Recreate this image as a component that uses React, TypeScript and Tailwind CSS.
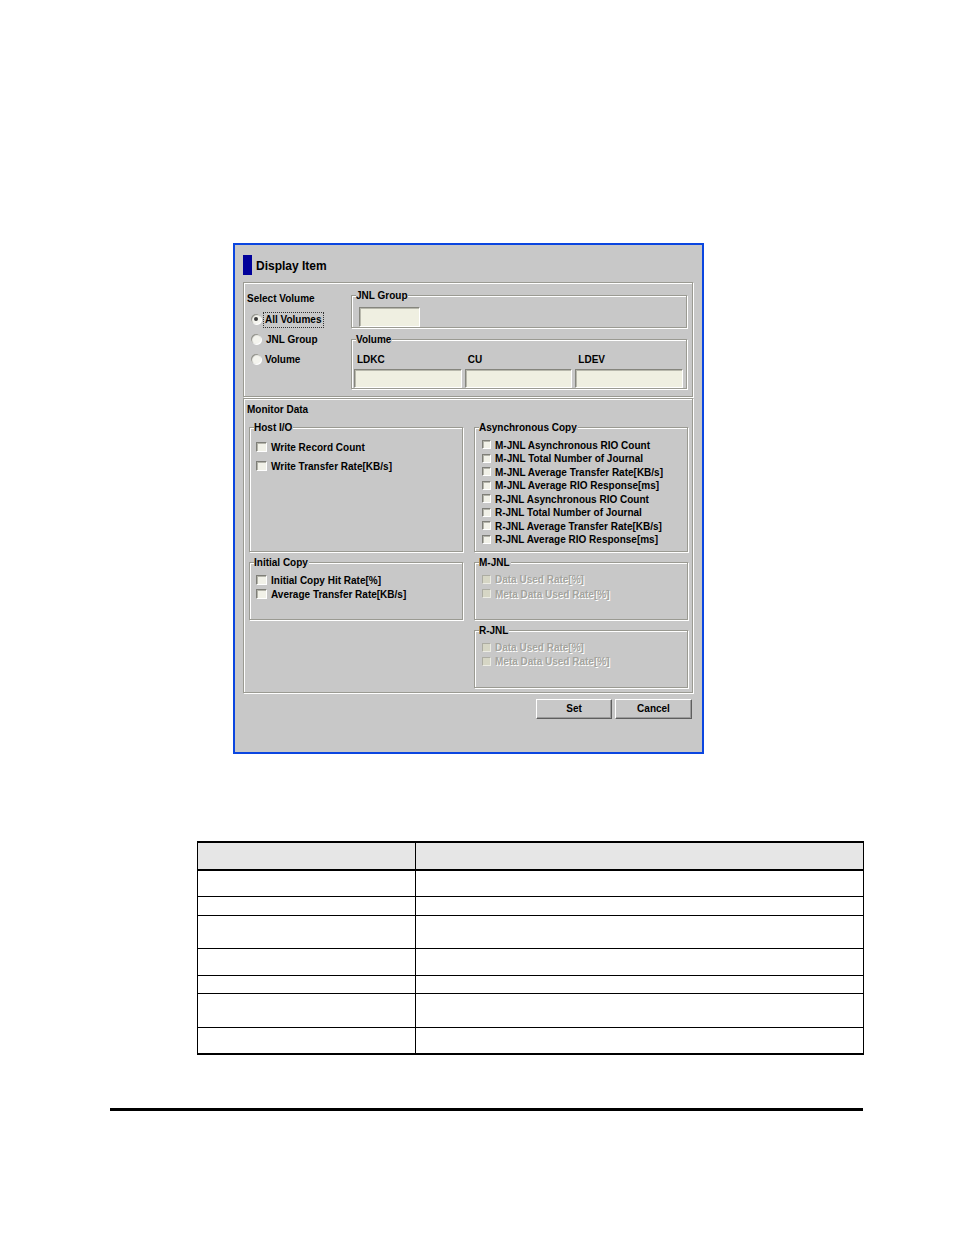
import React from "react";

const FONT = { fontFamily: '"Liberation Sans", Arial, sans-serif' };

function Group({
  title,
  className = "",
  children,
}: {
  title: string;
  className?: string;
  children?: React.ReactNode;
}) {
  return (
    <fieldset
      className={`min-w-0 border border-[#9a9a92] shadow-[1px_1px_0_#ffffff,inset_1px_1px_0_#ffffff] ${className}`}
    >
      <legend className="ml-[4px] pr-[1px] bg-[#c8c8c8] text-[10px] leading-[12px] font-bold text-black">
        <span className="block translate-y-[1px]">{title}</span>
      </legend>
      {children}
    </fieldset>
  );
}

function Check({ size = 10, disabled = false }: { size?: number; disabled?: boolean }) {
  const sz = size === 9 ? "w-[9px] h-[9px]" : "w-[11px] h-[10px]";
  if (disabled) {
    return (
      <span
        className={`inline-block shrink-0 ${sz} bg-[#d6d6c5] border border-t-[#acaca2] border-l-[#acaca2] border-r-[#ececE4] border-b-[#ecece4]`}
      />
    );
  }
  return (
    <span
      className={`inline-block shrink-0 ${sz} bg-[#f1f1e8] border border-t-[#7e7e78] border-l-[#7e7e78] border-r-white border-b-white shadow-[inset_1px_1px_0_#b4b4aa]`}
    />
  );
}

function Radio({ checked = false }: { checked?: boolean }) {
  return (
    <span className="inline-flex shrink-0 items-center justify-center w-[10px] h-[10px] rounded-full bg-[#f4f4ee] shadow-[inset_1px_1px_1px_#8a8a84,1px_1px_0_#ffffff]">
      {checked && <span className="w-[4px] h-[4px] rounded-full bg-[#3a3a3a]" />}
    </span>
  );
}

function Field({ className = "" }: { className?: string }) {
  return (
    <div
      className={`bg-[#efefe1] border border-t-[#85857d] border-l-[#85857d] border-r-white border-b-white shadow-[inset_1px_1px_0_#b8b8ac] ${className}`}
    />
  );
}

function CheckRow({
  label,
  h,
  size = 10,
  disabled = false,
  ml,
}: {
  label: string;
  h: string;
  size?: number;
  disabled?: boolean;
  ml: string;
}) {
  return (
    <div className={`flex items-center ${h} ${ml} gap-[4px]`}>
      <Check size={size} disabled={disabled} />
      <span
        className={`translate-y-[1px] text-[10px] leading-[12px] font-bold whitespace-nowrap ${
          disabled ? "text-[#a4a49e] [text-shadow:1px_1px_0_#ffffff]" : "text-black"
        }`}
      >
        {label}
      </span>
    </div>
  );
}

const etched =
  "border border-[#9a9a92] shadow-[1px_1px_0_#ffffff,inset_1px_1px_0_#ffffff]";

function Dialog() {
  return (
    <div className="ml-[233px] mt-[243px] w-[471px] h-[511px] border-2 border-[#0b46e0] bg-[#c8c8c8] pl-[8px] pr-[9px] text-black">
      {/* title */}
      <div className="mt-[10px] h-[20px] flex items-center gap-[4px]">
        <div className="w-[9px] h-[20px] bg-[#00009a]" />
        <span className="translate-y-[1px] text-[12px] leading-[14px] font-bold">Display Item</span>
      </div>

      {/* Select volume panel */}
      <div className={`mt-[7px] h-[115px] flex ${etched}`}>
        <div className="w-[107px] pl-[3px] pt-[9px]">
          <div className="translate-y-[1px] text-[10px] leading-[12px] font-bold">Select Volume</div>
          <div className="mt-[5px] flex flex-col">
            <div className="h-[20px] flex items-center pl-[4px] gap-[4px]">
              <Radio checked />
              <span className="translate-y-[1px] text-[10px] leading-[12px] font-bold outline outline-1 outline-dotted outline-[#333] outline-offset-[1px]">
                All Volumes
              </span>
            </div>
            <div className="h-[20px] flex items-center pl-[4px] gap-[5px]">
              <Radio />
              <span className="translate-y-[1px] text-[10px] leading-[12px] font-bold">JNL Group</span>
            </div>
            <div className="h-[20px] flex items-center pl-[4px] gap-[4px]">
              <Radio />
              <span className="translate-y-[1px] text-[10px] leading-[12px] font-bold">Volume</span>
            </div>
          </div>
        </div>
        <div className="flex-1 pt-[6px] pr-[5px] flex flex-col">
          <Group title="JNL Group" className="h-[39px]">
            <Field className="mt-[6px] ml-[7px] w-[61px] h-[20px]" />
          </Group>
          <Group title="Volume" className="mt-[5px] h-[56px]">
            <div className="grid grid-cols-3 gap-x-[3px] pl-[2px] pr-[3px]">
              {["LDKC", "CU", "LDEV"].map((l) => (
                <div key={l} className="flex flex-col">
                  <span className="mt-[8px] pl-[3px] translate-y-[1px] text-[10px] leading-[12px] font-bold">{l}</span>
                  <Field className="mt-[4px] h-[19px]" />
                </div>
              ))}
            </div>
          </Group>
        </div>
      </div>

      {/* Monitor data panel */}
      <div className={`mt-[1px] h-[295px] pl-[5px] pr-[4px] pt-[4px] ${etched}`}>
        <div className="-ml-[2px] translate-y-[1px] text-[10px] leading-[12px] font-bold">Monitor Data</div>
        <div className="mt-[6px] grid grid-cols-[214px_214px] gap-x-[11px]">
          <div className="flex flex-col gap-[4px]">
            <Group title="Host I/O" className="h-[131px]">
              <div className="pt-[4px]">
                <CheckRow label="Write Record Count" h="h-[19px]" ml="ml-[6px]" />
                <CheckRow label="Write Transfer Rate[KB/s]" h="h-[19px]" ml="ml-[6px]" />
              </div>
            </Group>
            <Group title="Initial Copy" className="h-[64px]">
              <div className="pt-[5px]">
                <CheckRow label="Initial Copy Hit Rate[%]" h="h-[14px]" ml="ml-[6px]" />
                <CheckRow label="Average Transfer Rate[KB/s]" h="h-[14px]" ml="ml-[6px]" />
              </div>
            </Group>
          </div>
          <div className="flex flex-col gap-[4px]">
            <Group title="Asynchronous Copy" className="h-[131px]">
              <div className="pt-[5px]">
                {[
                  "M-JNL Asynchronous RIO Count",
                  "M-JNL Total Number of Journal",
                  "M-JNL Average Transfer Rate[KB/s]",
                  "M-JNL Average RIO Response[ms]",
                  "R-JNL Asynchronous RIO Count",
                  "R-JNL Total Number of Journal",
                  "R-JNL Average Transfer Rate[KB/s]",
                  "R-JNL Average RIO Response[ms]",
                ].map((l) => (
                  <CheckRow key={l} label={l} h="h-[13.5px]" size={9} ml="ml-[7px]" />
                ))}
              </div>
            </Group>
            <Group title="M-JNL" className="h-[64px]">
              <div className="pt-[4px]">
                <CheckRow label="Data Used Rate[%]" h="h-[14.5px]" size={9} ml="ml-[7px]" disabled />
                <CheckRow label="Meta Data Used Rate[%]" h="h-[14.5px]" size={9} ml="ml-[7px]" disabled />
              </div>
            </Group>
            <Group title="R-JNL" className="h-[64px]">
              <div className="pt-[4px]">
                <CheckRow label="Data Used Rate[%]" h="h-[14px]" size={9} ml="ml-[7px]" disabled />
                <CheckRow label="Meta Data Used Rate[%]" h="h-[14px]" size={9} ml="ml-[7px]" disabled />
              </div>
            </Group>
          </div>
        </div>
      </div>

      {/* buttons */}
      <div className="mt-[6px] flex justify-end gap-[3px] pr-[1px]">
        <button className="w-[76px] h-[20px] bg-[#c8c8c8] border border-t-white border-l-white border-r-[#5e5e5e] border-b-[#5e5e5e] shadow-[inset_-1px_-1px_0_#9c9c9c] text-[10px] font-bold leading-[12px]">
          Set
        </button>
        <button className="w-[77px] h-[20px] bg-[#c8c8c8] border border-t-white border-l-white border-r-[#5e5e5e] border-b-[#5e5e5e] shadow-[inset_-1px_-1px_0_#9c9c9c] text-[10px] font-bold leading-[12px]">
          Cancel
        </button>
      </div>
    </div>
  );
}

function TableBlock() {
  const rows = ["h-[26px]", "h-[19px]", "h-[33px]", "h-[27px]", "h-[18px]", "h-[34px]", "h-[25px]"];
  return (
    <div className="ml-[197px] mt-[87px] w-[667px] border-x border-t-2 border-b-2 border-black bg-white">
      <div className="h-[28px] grid grid-cols-[218px_1fr] bg-[#e6e6e6] border-b-2 border-black">
        <div className="border-r border-black" />
        <div />
      </div>
      {rows.map((h, i) => (
        <div
          key={i}
          className={`${h} grid grid-cols-[218px_1fr] ${i < rows.length - 1 ? "border-b border-black" : ""}`}
        >
          <div className="border-r border-black" />
          <div />
        </div>
      ))}
    </div>
  );
}

export default function App() {
  return (
    <div className="w-[954px] min-h-[1235px] bg-white flex flex-col" style={FONT}>
      <Dialog />
      <TableBlock />
      <div className="ml-[110px] mt-[53px] w-[753px] h-[3px] bg-black" />
    </div>
  );
}
